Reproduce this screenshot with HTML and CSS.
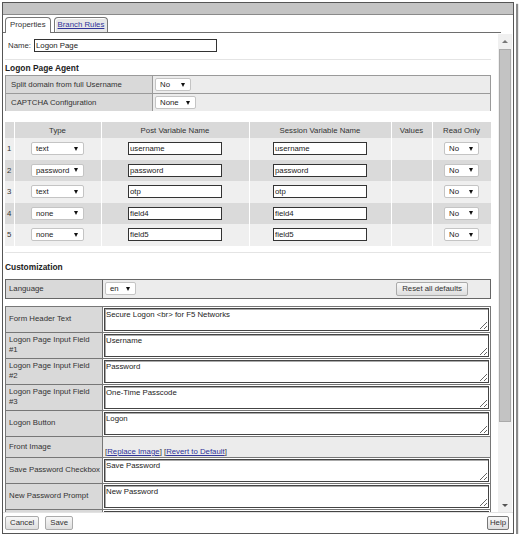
FILE: index.html
```html
<!DOCTYPE html>
<html lang="en">
<head>
    <meta charset="UTF-8">
    <meta name="viewport" content="width=device-width, initial-scale=1.0">
    <title>Logon Page</title>
    <link rel="stylesheet" href="styles.css">
</head>
<body>
    <div class="dialog">
        <div class="titlebar"></div>

        <div class="tabs">
            <span class="tab active">Properties</span>
            <span class="tab"><a href="#">Branch Rules</a></span>
        </div>

        <div class="panel">
            <div class="content">
                <div class="name-row">
                    <label>Name:</label>
                    <input type="text" class="name" value="Logon Page">
                </div>

                <hr>
                <h3>Logon Page Agent</h3>
                <table class="agent">
                    <colgroup><col class="c-label"><col></colgroup>
                    <tr>
                        <td class="label">Split domain from full Username</td>
                        <td><span class="sel w-no">No</span></td>
                    </tr>
                    <tr>
                        <td class="label">CAPTCHA Configuration</td>
                        <td><span class="sel w-none">None</span></td>
                    </tr>
                </table>

                <table class="vars">
                    <colgroup>
                        <col style="width: 9px">
                        <col style="width: 87px">
                        <col style="width: 148px">
                        <col style="width: 142px">
                        <col style="width: 41px">
                        <col style="width: 59px">
                    </colgroup>
                    <thead>
                        <tr>
                            <th></th>
                            <th>Type</th>
                            <th>Post Variable Name</th>
                            <th>Session Variable Name</th>
                            <th>Values</th>
                            <th>Read Only</th>
                        </tr>
                    </thead>
                    <tbody>
                        <tr>
                            <td class="num">1</td>
                            <td><span class="sel w-type">text</span></td>
                            <td><input type="text" class="var" value="username"></td>
                            <td><input type="text" class="var" value="username"></td>
                            <td></td>
                            <td><span class="sel w-ro">No</span></td>
                        </tr>
                        <tr>
                            <td class="num">2</td>
                            <td><span class="sel w-type">password</span></td>
                            <td><input type="text" class="var" value="password"></td>
                            <td><input type="text" class="var" value="password"></td>
                            <td></td>
                            <td><span class="sel w-ro">No</span></td>
                        </tr>
                        <tr>
                            <td class="num">3</td>
                            <td><span class="sel w-type">text</span></td>
                            <td><input type="text" class="var" value="otp"></td>
                            <td><input type="text" class="var" value="otp"></td>
                            <td></td>
                            <td><span class="sel w-ro">No</span></td>
                        </tr>
                        <tr>
                            <td class="num">4</td>
                            <td><span class="sel w-type">none</span></td>
                            <td><input type="text" class="var" value="field4"></td>
                            <td><input type="text" class="var" value="field4"></td>
                            <td></td>
                            <td><span class="sel w-ro">No</span></td>
                        </tr>
                        <tr>
                            <td class="num">5</td>
                            <td><span class="sel w-type">none</span></td>
                            <td><input type="text" class="var" value="field5"></td>
                            <td><input type="text" class="var" value="field5"></td>
                            <td></td>
                            <td><span class="sel w-ro">No</span></td>
                        </tr>
                    </tbody>
                </table>

                <hr class="sep">
                <h3 class="custom-title">Customization</h3>

                <table class="lang">
                    <colgroup><col class="c-label2"><col></colgroup>
                    <tr>
                        <td class="label">Language</td>
                        <td>
                            <div class="lang-row">
                                <span class="sel w-lang">en</span>
                                <button type="button" class="btn reset-btn">Reset all defaults</button>
                            </div>
                        </td>
                    </tr>
                </table>

                <table class="custom">
                    <colgroup><col class="c-label2"><col></colgroup>
                    <tr>
                        <td class="label">Form Header Text</td>
                        <td><textarea>Secure Logon &lt;br&gt; for F5 Networks</textarea></td>
                    </tr>
                    <tr>
                        <td class="label">Logon Page Input Field #1</td>
                        <td><textarea>Username</textarea></td>
                    </tr>
                    <tr>
                        <td class="label">Logon Page Input Field #2</td>
                        <td><textarea>Password</textarea></td>
                    </tr>
                    <tr>
                        <td class="label">Logon Page Input Field #3</td>
                        <td><textarea>One-Time Passcode</textarea></td>
                    </tr>
                    <tr>
                        <td class="label">Logon Button</td>
                        <td><textarea>Logon</textarea></td>
                    </tr>
                    <tr class="image-row">
                        <td class="label">Front Image</td>
                        <td>[<a href="#">Replace Image</a>] [<a href="#">Revert to Default</a>]</td>
                    </tr>
                    <tr>
                        <td class="label one-line">Save Password Checkbox</td>
                        <td><textarea>Save Password</textarea></td>
                    </tr>
                    <tr>
                        <td class="label">New Password Prompt</td>
                        <td><textarea>New Password</textarea></td>
                    </tr>
                    <tr>
                        <td class="label">Verify Password Prompt</td>
                        <td><textarea>Verify Password</textarea></td>
                    </tr>
                </table>
            </div>

            <div class="scrollbar">
                <div class="sb-arrow up"></div>
                <div class="sb-thumb"></div>
                <div class="sb-track"></div>
                <div class="sb-arrow down"></div>
            </div>
        </div>

        <div class="footer">
            <button type="button" class="btn">Cancel</button>
            <button type="button" class="btn">Save</button>
            <button type="button" class="btn help-btn">Help</button>
        </div>
    </div>
</body>
</html>
```

FILE: styles.css
```css
body {
    margin: 0;
    background: #fff;
    font-family: "Liberation Sans", Arial, sans-serif;
    font-size: 7.8px;
    color: #333;
}

a {
    color: #2f3399;
}

.dialog {
    width: 510px;
    margin: 2px 0 0 2px;
    border: 1px solid #555;
    box-shadow: 2px 0 0 #fff, 4px 2px 1px #8a8a8a;
}

.titlebar {
    height: 11px;
    background: #c4c4c4;
    border-bottom: 1px solid #8a8a8a;
}

/* tabs */
.tabs {
    display: flex;
    align-items: flex-end;
    gap: 3px;
    height: 15px;
    margin: 2px 12px 0 0;
    padding-left: 2px;
    border-bottom: 1px solid #6e6e6e;
}

.tab {
    height: 14px;
    line-height: 14px;
    padding: 0 3px;
    border: 1px solid #777;
    border-bottom: none;
    border-radius: 4px 4px 0 0;
    background: #e8e8e8;
    box-shadow: inset 1px 1px 0 #fff;
}

.tab.active {
    height: 15px;
    padding: 0 4px;
    margin-bottom: -1px;
    background: #fff;
}

/* scrolling panel */
.panel {
    display: flex;
    height: 479px;
}

.content {
    flex: 1;
    overflow: hidden;
    padding: 6px 0 0 2px;
}

.scrollbar {
    width: 14px;
    margin: 1px 1px 0 0;
    display: flex;
    flex-direction: column;
    background: #f0f0f0;
}

.sb-arrow {
    height: 15px;
    display: flex;
    align-items: center;
    justify-content: center;
}

.sb-arrow.down {
    height: 13px;
}

.sb-arrow.up::before {
    content: "";
    border-left: 3px solid transparent;
    border-right: 3px solid transparent;
    border-bottom: 3px solid #777;
}

.sb-arrow.down::before {
    content: "";
    border-left: 3px solid transparent;
    border-right: 3px solid transparent;
    border-top: 3px solid #555;
}

.sb-thumb {
    height: 373px;
    margin: 0 1px;
    background: #c3c3c3;
    border: 1px solid #aaa;
    box-sizing: border-box;
}

.sb-track {
    flex: 1;
}

/* name */
.name-row {
    display: flex;
    align-items: center;
    gap: 3px;
    padding-left: 3px;
}

input[type="text"] {
    box-sizing: border-box;
    height: 13px;
    padding: 0 1px;
    border: 1px solid #333;
    font-family: inherit;
    font-size: 7.8px;
    color: #222;
    outline: none;
}

.name {
    width: 183px;
}

hr {
    width: 486px;
    margin: 7px 0 0;
    border: 0;
    border-top: 1px solid #e4e4e4;
}

h3 {
    margin: 2px 0 1px 0;
    font-size: 8.4px;
    line-height: 12px;
    color: #222;
}

table {
    width: 486px;
    border-collapse: collapse;
    table-layout: fixed;
}

td {
    padding: 0;
}

.label {
    background: #d9d9d9;
    padding: 0 1px 0 3px;
    line-height: 10px;
}

/* fake select boxes */
.sel {
    display: inline-flex;
    align-items: center;
    justify-content: space-between;
    box-sizing: border-box;
    height: 13px;
    padding: 0 5px 0 4px;
    background: #fff;
    border: 1px solid #c4c4c4;
    border-radius: 2px;
    color: #222;
    vertical-align: middle;
}

.sel::after {
    content: "";
    border-left: 2.5px solid transparent;
    border-right: 2.5px solid transparent;
    border-top: 4px solid #111;
}

.w-no { width: 36px; }
.w-none { width: 41px; }
.w-type { width: 53px; }
.w-ro { width: 35px; }
.w-lang { width: 31px; }

/* logon page agent */
.agent .c-label {
    width: 147px;
}

.agent td {
    height: 17px;
    border: 1px solid #9a9a9a;
    border-bottom: none;
    background: #ececec;
    padding-left: 2px;
}

.agent td.label {
    background: #d9d9d9;
    padding-left: 5px;
}

/* variables */
.vars {
    margin-top: 11px;
}

.vars th {
    height: 16px;
    padding: 0;
    background: #d9d9d9;
    font-weight: normal;
    color: #333;
    border-right: 1px solid #fff;
}

.vars td {
    height: 21.5px;
    text-align: center;
    border-right: 1px solid #fff;
    background: #efefef;
}

.vars tbody tr:nth-child(even) td {
    background: #dadada;
}

.vars td.num {
    text-align: left;
    padding-left: 2px;
}

.var {
    width: 94px;
}

hr.sep {
    margin-top: 6px;
}

.custom-title {
    margin: 8px 0 6px;
}

/* customization */
.c-label2 {
    width: 97px;
}

.lang td {
    height: 18px;
    border: 1px solid #666;
    background: #ececec;
}

.lang td.label {
    background: #d9d9d9;
}

.lang-row {
    display: flex;
    align-items: center;
    justify-content: space-between;
    padding: 0 22px 0 2px;
}

.custom {
    margin-top: 7px;
}

.custom td {
    border: 1px solid #777;
    padding: 1px;
    background: #fff;
}

.custom td.label {
    background: #d9d9d9;
    padding: 0 8px 0 3px;
}

.custom td.one-line {
    white-space: nowrap;
    padding-right: 0;
}

textarea {
    display: block;
    box-sizing: border-box;
    width: 100%;
    height: 23px;
    margin: 0;
    padding: 1px 1px 0;
    border: 1px solid #444;
    box-shadow: inset 1px 1px 0 #aaa;
    font-family: inherit;
    font-size: 7.8px;
    line-height: 10px;
    color: #222;
    outline: none;
}

.image-row td {
    height: 19px;
    background: #ececec;
    vertical-align: bottom;
    padding: 0 2px 1px;
}

.image-row td.label {
    vertical-align: middle;
}

/* footer */
.footer {
    display: flex;
    align-items: center;
    gap: 6px;
    height: 20px;
    padding: 0 4px 0 2px;
    border-top: 1px solid #e2e2e2;
}

.btn {
    height: 14px;
    padding: 0 4px;
    font-family: inherit;
    font-size: 7.8px;
    line-height: 12px;
    color: #333;
    background: linear-gradient(#f8f8f8, #dedede);
    border: 1px solid #aaa;
    border-radius: 2px;
    cursor: pointer;
}

.reset-btn {
    padding: 0 5px;
}

.help-btn {
    margin-left: auto;
    padding: 0 2px;
    border-color: #777;
}
```
